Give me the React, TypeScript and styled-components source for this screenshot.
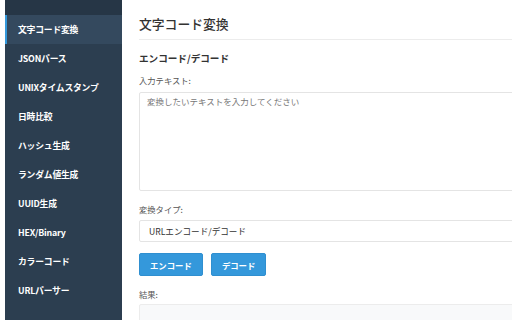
import { FunctionComponent } from 'react';
import styled, { createGlobalStyle } from 'styled-components';

const GlobalStyle = createGlobalStyle`
    html, body {
        margin: 0;
        padding: 0;
        background: #ffffff;
        overflow: hidden;
    }

    body {
        font-family: 'Noto Sans CJK JP', 'Noto Sans', 'Liberation Sans', sans-serif;
        color: #333333;
    }
`;

const Layout = styled.div`
    display: flex;
    height: 320px;
    padding-left: 5px;
    background: #ffffff;
`;

const Sidebar = styled.nav`
    display: flex;
    flex-direction: column;
    flex-shrink: 0;
    width: 117px;
    background: #2c3e50;
`;

const SidebarTop = styled.div`
    height: 15px;
    background: #263646;
`;

const NavItem = styled.div<{ $active?: boolean }>`
    display: flex;
    align-items: center;
    height: 29px;
    padding-left: ${({ $active }) => ($active ? '11px' : '13px')};
    border-left: ${({ $active }) => ($active ? '2px solid #3498db' : 'none')};
    background: ${({ $active }) => ($active ? '#34495e' : 'transparent')};
    color: #ffffff;
    font-size: 8.8px;
    font-weight: 700;
    letter-spacing: -0.2px;
    white-space: nowrap;
`;

const Main = styled.main`
    flex-shrink: 0;
    width: 440px;
    padding-left: 17px;
`;

const Header = styled.header`
    display: flex;
    align-items: center;
    height: 40px;
    border-bottom: 1px solid #ececec;
    box-sizing: border-box;
    padding-top: 7px;
`;

const Title = styled.h1`
    margin: 0;
    font-size: 12.8px;
    font-weight: 500;
    color: #333333;
`;

const Section = styled.section`
    display: flex;
    flex-direction: column;
`;

const SectionTitle = styled.h2`
    margin: 11px 0 0;
    font-size: 9.6px;
    font-weight: 700;
    line-height: 14px;
    color: #333333;
`;

const Label = styled.label`
    margin-top: ${({ $gap }: { $gap: number }) => $gap}px;
    font-size: 8.3px;
    line-height: 12px;
    color: #555555;
`;

const TextArea = styled.textarea`
    margin-top: 6px;
    height: 99px;
    padding: 2px 7px;
    box-sizing: border-box;
    border: 1px solid #e4e4e4;
    border-radius: 2px;
    resize: none;
    font-family: inherit;
    font-size: 8.5px;
    line-height: 12px;
    color: #333333;

    &::placeholder {
        color: #777777;
    }
`;

const Select = styled.div`
    display: flex;
    align-items: center;
    margin-top: 5px;
    height: 22px;
    box-sizing: border-box;
    padding-left: 9px;
    border: 1px solid #e4e4e4;
    border-radius: 2px;
    font-size: 8.6px;
    color: #333333;
`;

const Buttons = styled.div`
    display: flex;
    gap: 8px;
    margin-top: 11px;
`;

const Button = styled.button`
    height: 23px;
    padding: 0 10px;
    border: 1px solid #2f8fd0;
    border-radius: 2px;
    background: #3498db;
    color: #ffffff;
    font-family: inherit;
    font-size: 8.4px;
    font-weight: 700;
`;

const ResultBox = styled.div`
    margin-top: 4px;
    height: 40px;
    border: 1px solid #ececec;
    border-radius: 2px;
    background: #f8f9fa;
`;

const navItems = [
    '文字コード変換',
    'JSONパース',
    'UNIXタイムスタンプ',
    '日時比較',
    'ハッシュ生成',
    'ランダム値生成',
    'UUID生成',
    'HEX/Binary',
    'カラーコード',
    'URLパーサー',
];

const App: FunctionComponent = () => {
    return (
        <>
            <GlobalStyle />
            <Layout>
                <Sidebar>
                    <SidebarTop />
                    {navItems.map((item, i) => (
                        <NavItem key={item} $active={i === 0}>
                            {item}
                        </NavItem>
                    ))}
                </Sidebar>
                <Main>
                    <Header>
                        <Title>文字コード変換</Title>
                    </Header>
                    <Section>
                        <SectionTitle>エンコード/デコード</SectionTitle>
                        <Label $gap={9}>入力テキスト:</Label>
                        <TextArea placeholder="変換したいテキストを入力してください" />
                        <Label $gap={12}>変換タイプ:</Label>
                        <Select>URLエンコード/デコード</Select>
                        <Buttons>
                            <Button type="button">エンコード</Button>
                            <Button type="button">デコード</Button>
                        </Buttons>
                        <Label $gap={12}>結果:</Label>
                        <ResultBox />
                    </Section>
                </Main>
            </Layout>
        </>
    );
};

export default App;
